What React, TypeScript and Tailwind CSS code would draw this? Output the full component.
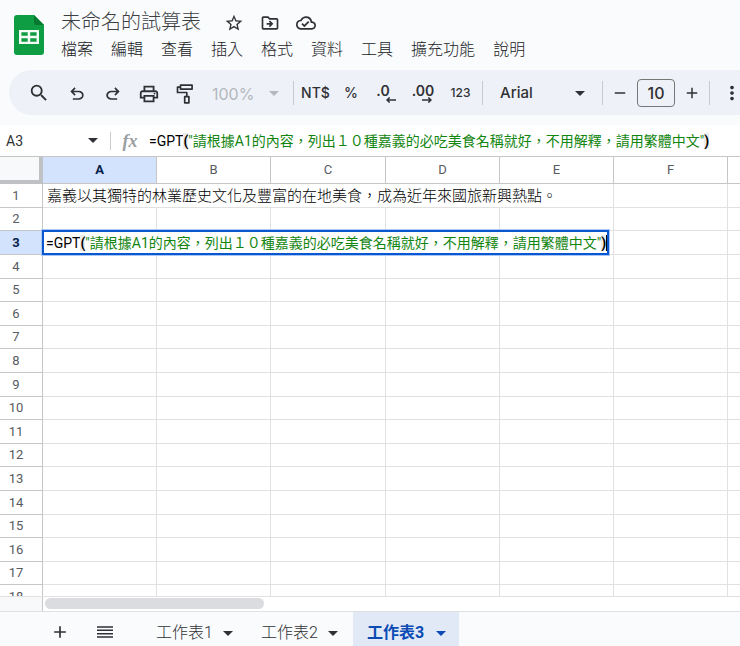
import type { ReactNode } from "react";
import {
  MdAdd,
  MdMoreVert,
  MdOutlineCloudDone,
  MdOutlineDriveFileMove,
  MdOutlinePrint,
  MdRemove,
  MdSearch,
  MdStarBorder,
} from "react-icons/md";

const MENUS = ["檔案", "編輯", "查看", "插入", "格式", "資料", "工具", "擴充功能", "說明"];
const COLUMNS = ["A", "B", "C", "D", "E", "F"];
const ROWS = Array.from({ length: 18 }, (_, i) => i + 1);
const SHEETS = ["工作表1", "工作表2", "工作表3"];
const A1_TEXT = "嘉義以其獨特的林業歷史文化及豐富的在地美食，成為近年來國旅新興熱點。";
const PROMPT = '"請根據A1的內容，列出１０種嘉義的必吃美食名稱就好，不用解釋，請用繁體中文"';

function SheetsLogo() {
  return (
    <svg viewBox="0 0 30 40" className="h-10 w-[30px] shrink-0" role="img" aria-label="試算表">
      <path d="M3 0h17l10 10v27a3 3 0 0 1-3 3H3a3 3 0 0 1-3-3V3a3 3 0 0 1 3-3z" fill="#0f9d43" />
      <path d="M20 0l10 10h-8a2 2 0 0 1-2-2z" fill="#077a31" />
      <path
        fillRule="evenodd"
        d="M5 15h20v14H5zM7.400 17.200v3.600h6.300v-3.600zM16.200 17.200v3.600h6.400v-3.600zM7.400 23.200v3.600h6.300v-3.600zM16.200 23.200v3.600h6.400v-3.600z"
        fill="#f2fbf4"
      />
    </svg>
  );
}

function Caret({ className = "" }: { className?: string }) {
  return (
    <svg viewBox="0 0 10 5" className={`h-[5px] w-[10px] shrink-0 fill-current ${className}`} aria-hidden="true">
      <path d="M0 0h10L5 5z" />
    </svg>
  );
}

function UndoIcon() {
  return (
    <svg viewBox="0 -960 960 960" className="size-5 fill-current" aria-hidden="true">
      <path d="M280-200v-80h284q63 0 109.500-40T720-420q0-60-46.500-100T564-560H312l104 104-56 56-200-200 200-200 56 56-104 104h252q97 0 169.500 63T800-420q0 94-72.500 157T564-200H280Z" />
    </svg>
  );
}

function RedoIcon() {
  return (
    <svg viewBox="0 -960 960 960" className="size-5 fill-current" aria-hidden="true">
      <path d="M396-200q-97 0-169.500-63T154-420q0-94 72.500-157T396-640h252L544-744l56-56 200 200-200 200-56-56 104-104H396q-63 0-109.500 40T240-420q0 60 46.500 100T396-280h284v80H396Z" />
    </svg>
  );
}

function RollerIcon() {
  return (
    <svg viewBox="0 0 18 20" className="h-5 w-[18px]" fill="none" stroke="currentColor" strokeWidth="1.700" strokeLinejoin="round" aria-hidden="true">
      <path d="M4.500 1.200h11.600v3.900H4.500z" />
      <path d="M4.500 3.100H1.500v5.400h9.300v4" />
      <path d="M8.700 12.600h4.200v6.200H8.700z" />
    </svg>
  );
}

function ArrowLine({ right = false }: { right?: boolean }) {
  return (
    <svg viewBox="0 0 10 6" className="h-[6px] w-[10px]" fill="none" stroke="currentColor" strokeWidth="1.500" aria-hidden="true">
      {right ? <path d="M0 3h9M6.300.4 9 3 6.300 5.600" /> : <path d="M10 3H1M3.700.4 1 3l2.700 2.600" />}
    </svg>
  );
}

function ToolButton({ label, children }: { label: string; children: ReactNode }) {
  return (
    <button type="button" aria-label={label} className="flex h-9 w-9 shrink-0 items-center justify-center">
      {children}
    </button>
  );
}

function Divider() {
  return <span className="h-6 w-px shrink-0 bg-[#c7cacf]" />;
}

function Formula() {
  return (
    <>
      =GPT<span className="bg-[#ececec] font-bold">(</span>
      <span className="text-[#12850f]">{PROMPT}</span>
      <span className="bg-[#ececec] font-bold">)</span>
    </>
  );
}

function Header() {
  return (
    <header className="flex gap-4 pt-2 pl-[14px] text-[#3c4043]">
      <div className="pt-[7px]">
        <SheetsLogo />
      </div>
      <div>
        <div className="flex h-7 items-center">
          <input
            aria-label="文件名稱"
            defaultValue="未命名的試算表"
            className="w-[164px] bg-transparent pl-px text-xl font-light outline-none"
          />
          <div className="flex items-center gap-4 pt-0.5 text-[#303134]">
            <button type="button" aria-label="加上星號"><MdStarBorder className="size-5" /></button>
            <button type="button" aria-label="移動"><MdOutlineDriveFileMove className="size-5" /></button>
            <button type="button" aria-label="雲端儲存狀態"><MdOutlineCloudDone className="size-5" /></button>
          </div>
        </div>
        <nav className="flex h-7 items-center gap-[18px] pl-px text-base font-light text-[#202124]">
          {MENUS.map((m) => (
            <button key={m} type="button" className="whitespace-nowrap">{m}</button>
          ))}
        </nav>
      </div>
    </header>
  );
}

function Toolbar() {
  return (
    <div className="mt-1.5 ml-[9px] flex h-[45px] items-center overflow-hidden rounded-l-full bg-[#eef2f8] pl-3 font-['Inter','Noto_Sans_CJK_TC',sans-serif] text-[#303134]">
      <ToolButton label="搜尋"><MdSearch className="size-[22px]" /></ToolButton>
      <div className="ml-0.5 flex pt-0.5">
        <ToolButton label="復原"><UndoIcon /></ToolButton>
        <ToolButton label="重做"><RedoIcon /></ToolButton>
        <ToolButton label="列印"><MdOutlinePrint className="size-[22px]" /></ToolButton>
        <ToolButton label="套用格式"><RollerIcon /></ToolButton>
      </div>
      <label className="relative flex w-[90px] shrink-0 items-center pt-0.5 text-[#b4b8bd]">
        <select aria-label="縮放" className="w-full appearance-none bg-transparent pl-[9px] text-base outline-none">
          <option>100%</option>
        </select>
        <Caret className="pointer-events-none absolute right-[14px]" />
      </label>
      <Divider />
      <button type="button" aria-label="貨幣格式" className="w-[43px] shrink-0 text-sm font-medium">NT$</button>
      <button type="button" aria-label="百分比格式" className="w-7 shrink-0 text-sm font-medium">%</button>
      <button type="button" aria-label="減少小數位數" className="ml-1 flex w-9 shrink-0 flex-col items-center pt-0.5 text-sm leading-3 font-semibold">
        <span className="pr-2">.0</span>
        <span className="pl-2"><ArrowLine /></span>
      </button>
      <button type="button" aria-label="增加小數位數" className="flex w-9 shrink-0 flex-col items-center pt-0.5 text-sm leading-3 font-semibold">
        <span>.00</span>
        <span className="pl-2"><ArrowLine right /></span>
      </button>
      <button type="button" aria-label="更多格式" className="mr-0.5 w-[39px] shrink-0 text-xs font-medium">123</button>
      <Divider />
      <label className="relative flex w-[119px] shrink-0 items-center pt-0.5">
        <select aria-label="字型" className="w-full appearance-none bg-transparent pl-[17px] text-[15px] font-medium outline-none">
          <option>Arial</option>
        </select>
        <Caret className="pointer-events-none absolute right-[17px]" />
      </label>
      <Divider />
      <button type="button" aria-label="縮小字型" className="flex w-[34px] shrink-0 justify-center"><MdRemove className="size-[18px]" /></button>
      <input
        aria-label="字型大小"
        defaultValue="10"
        className="h-7 w-[38px] shrink-0 rounded border border-[#747775] bg-transparent text-center text-base font-medium outline-none"
      />
      <button type="button" aria-label="放大字型" className="flex w-[34px] shrink-0 justify-center"><MdAdd className="size-[18px]" /></button>
      <Divider />
      <button type="button" aria-label="更多" className="flex w-[43px] shrink-0 justify-center"><MdMoreVert className="size-[22px]" /></button>
    </div>
  );
}

function FormulaBar() {
  return (
    <div className="mt-2.5 flex h-8 items-center border-b border-[#c4c7c5] bg-white">
      <input
        aria-label="名稱方塊"
        defaultValue="A3"
        className="w-[88px] bg-transparent pl-1.5 font-['Roboto',sans-serif] text-sm text-[#303134] outline-none"
      />
      <button type="button" aria-label="名稱方塊選單" className="mr-3 text-[#303134]"><Caret /></button>
      <span className="h-[18px] w-px bg-[#c7cacf]" />
      <span className="w-[38px] text-center font-['Liberation_Serif',serif] text-lg leading-5 font-bold text-[#9a9da1] italic">fx</span>
      <div
        role="textbox"
        aria-label="資料編輯列"
        className="flex-1 overflow-hidden font-['Roboto','Noto_Sans_CJK_TC',sans-serif] text-sm whitespace-nowrap text-black"
      >
        <Formula />
      </div>
    </div>
  );
}

function Grid() {
  return (
    <div className="min-h-0 flex-1 overflow-hidden bg-white">
      <table className="w-full table-fixed border-separate border-spacing-0">
        <colgroup>
          <col className="w-[43px]" />
          {COLUMNS.map((c) => (
            <col key={c} className={c === "C" ? "w-[115px]" : "w-[114px]"} />
          ))}
          <col />
        </colgroup>
        <thead>
          <tr className="h-[27px] font-['Roboto',sans-serif] text-[13px] text-[#575b5f]">
            <td className="border-r-4 border-b-4 border-[#bfc1c4] bg-[#f8f9fa] p-0" />
            {COLUMNS.map((c) => (
              <th
                key={c}
                scope="col"
                className={
                  c === "A"
                    ? "border-r border-b border-[#c4c7c5] bg-[#d3e3fd] p-0 font-bold text-[#041e49]"
                    : "border-r border-b border-[#c4c7c5] p-0 font-normal"
                }
              >
                {c}
              </th>
            ))}
            <td className="border-b border-[#c4c7c5] p-0" />
          </tr>
        </thead>
        <tbody>
          {ROWS.map((r) => (
            <tr key={r} className="h-6 nth-[5n]:h-[23px] nth-[5n+2]:h-[23px]">
              <th
                scope="row"
                className={
                  r === 3
                    ? "border-r border-b border-[#c4c7c5] bg-[#d3e3fd] p-0 pr-2.5 font-['Roboto',sans-serif] text-[13px] leading-5 font-bold text-[#041e49]"
                    : "border-r border-b border-[#c4c7c5] p-0 pr-2.5 font-['Roboto',sans-serif] text-[13px] leading-5 font-normal text-[#575b5f]"
                }
              >
                {r}
              </th>
              {r === 1 && (
                <td colSpan={5} className="overflow-hidden border-r border-b border-[#e1e1e1] p-0 pl-1 text-[15px] leading-5 font-light whitespace-nowrap text-black">
                  {A1_TEXT}
                </td>
              )}
              {(r === 1 ? COLUMNS.slice(5) : COLUMNS).map((c) => (
                <td key={c} className="relative border-r border-b border-[#e1e1e1] p-0">
                  {r === 3 && c === "A" && (
                    <div className="absolute -top-px -left-px z-10 flex h-[25px] w-max items-center border-2 border-[#0b57d0] bg-white pl-0.5 font-['Roboto','Noto_Sans_CJK_TC',sans-serif] text-sm leading-5 whitespace-nowrap text-black ring-1 ring-[#a8c7fa]">
                      <span>
                        <Formula />
                      </span>
                      <span className="h-4 w-px bg-black" />
                    </div>
                  )}
                </td>
              ))}
              <td className="border-b border-[#e1e1e1] p-0" />
            </tr>
          ))}
        </tbody>
      </table>
    </div>
  );
}

function SheetTabs() {
  return (
    <footer className="flex h-[35px] shrink-0 items-stretch border-t border-[#dfe1e5] bg-[#f9fbfd] pl-[42px] text-[#303134]">
      <button type="button" aria-label="新增工作表" className="flex w-9 items-center justify-center pt-1.5"><MdAdd className="size-5" /></button>
      <button type="button" aria-label="所有工作表" className="ml-[9px] flex w-9 items-center justify-center pt-1.5">
        <svg viewBox="0 0 16 12" className="h-3 w-4" stroke="currentColor" strokeWidth="1.400" aria-hidden="true">
          <path d="M0 1h16M0 4.300h16M0 7.700h16M0 11h16" />
        </svg>
      </button>
      <div className="ml-5 flex">
        {SHEETS.map((s, i) => (
          <button
            key={s}
            type="button"
            className={
              i === 2
                ? "flex w-[106px] items-center gap-3 bg-[#e1e9f7] pt-2 pl-3.5 text-base font-bold text-[#0b4bb3]"
                : "flex w-[105px] items-center gap-2.5 pt-2 pl-[13px] text-base font-light"
            }
          >
            {s}
            <Caret />
          </button>
        ))}
      </div>
    </footer>
  );
}

export default function App() {
  return (
    <div className="flex h-screen flex-col overflow-hidden bg-[#f9fbfd] font-['Roboto','Noto_Sans_CJK_TC',sans-serif]">
      <Header />
      <Toolbar />
      <FormulaBar />
      <Grid />
      <div className="flex h-[15px] shrink-0 border-t border-[#e1e1e1] bg-white">
        <div className="w-[43px] border-r border-[#c4c7c5] bg-[#f8f9fa]" />
        <div className="mt-px ml-0.5 h-[11px] w-[219px] rounded-full bg-[#dadce0]" />
      </div>
      <SheetTabs />
    </div>
  );
}
